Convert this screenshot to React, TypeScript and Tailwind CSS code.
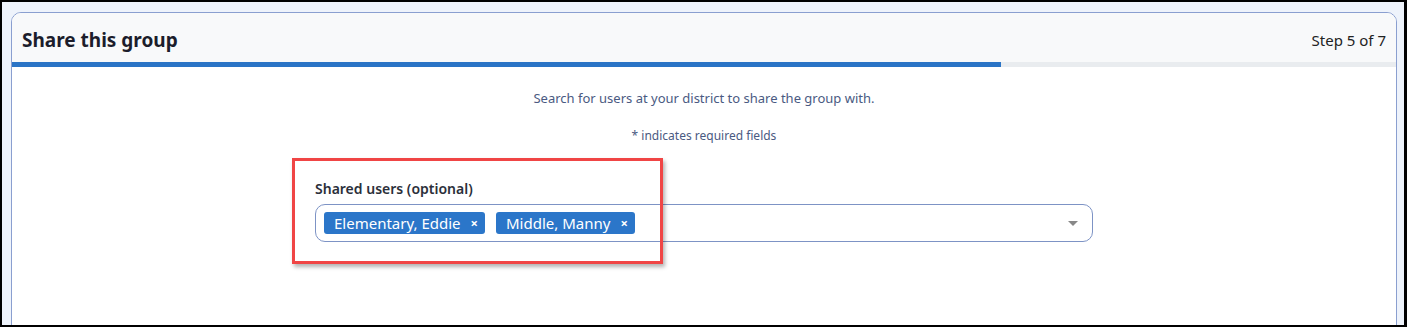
import { ChevronDown, X } from 'lucide-react';

const users = ['Elementary, Eddie', 'Middle, Manny'];

function UserChip({ name }: { name: string }): React.JSX.Element {
  return (
    <span className="flex items-center h-[22px] rounded-[3px] bg-[#2b76c9] pl-[10px] pr-[7px] text-[15px] leading-none text-white">
      {name}
      <span className="ml-[10px] text-[13px] font-bold leading-none">×</span>
    </span>
  );
}

export default function App(): React.JSX.Element {
  const step = 5;
  const total = 7;

  return (
    <div
      className="h-[327px] overflow-hidden border-l-2 border-t-2 border-r-[3px] border-b-2 border-black bg-[#eef3fb] pl-[9px] pr-[7px] pt-[10px]"
      style={{ fontFamily: '"Noto Sans", "Open Sans", sans-serif' }}
    >
      <div className="relative h-[400px] overflow-hidden rounded-[10px] border border-[#8a9fd0] bg-white">
        <div className="flex h-[49px] items-center justify-between bg-[#f8f9fa] px-[10px] pt-[5px]">
          <h2 className="text-[19px] font-bold text-[#1c1d2b]">Share this group</h2>
          <span className="text-[15px] text-[#222]">
            Step {step} of {total}
          </span>
        </div>
        <div className="h-[5px] bg-[#e9ecef]">
          <div className="h-full bg-[#2a74c6]" style={{ width: `${(step / total) * 100}%` }} />
        </div>

        <div className="flex flex-col items-center pt-[21px]">
          <p className="text-[13px] leading-5 text-[#4a5a82]">
            Search for users at your district to share the group with.
          </p>
          <p className="mt-[19px] text-[12px] leading-[18px] text-[#4a5a82]">* indicates required fields</p>

          <div className="mt-[35px] w-[778px]">
            <label className="block text-[14px] font-semibold leading-[18px] text-[#2b2f3a]">
              Shared users (optional)
            </label>
            <div className="mt-[6px] flex h-[38px] items-center gap-[11px] rounded-[10px] border border-[#7d93c5] pl-[8px] pr-[14px]">
              {users.map((u) => (
                <UserChip key={u} name={u} />
              ))}
              <span className="ml-auto h-0 w-0 border-l-[5px] border-r-[5px] border-t-[5px] border-l-transparent border-r-transparent border-t-[#888]" />
            </div>
          </div>
        </div>

        {/* highlight box from the screenshot annotation */}
        <div className="absolute left-[280px] top-[145px] h-[106px] w-[371px] border-[3px] border-[#f04545] shadow-[2px_3px_4px_rgba(0,0,0,0.3)]" />
      </div>
    </div>
  );
}
